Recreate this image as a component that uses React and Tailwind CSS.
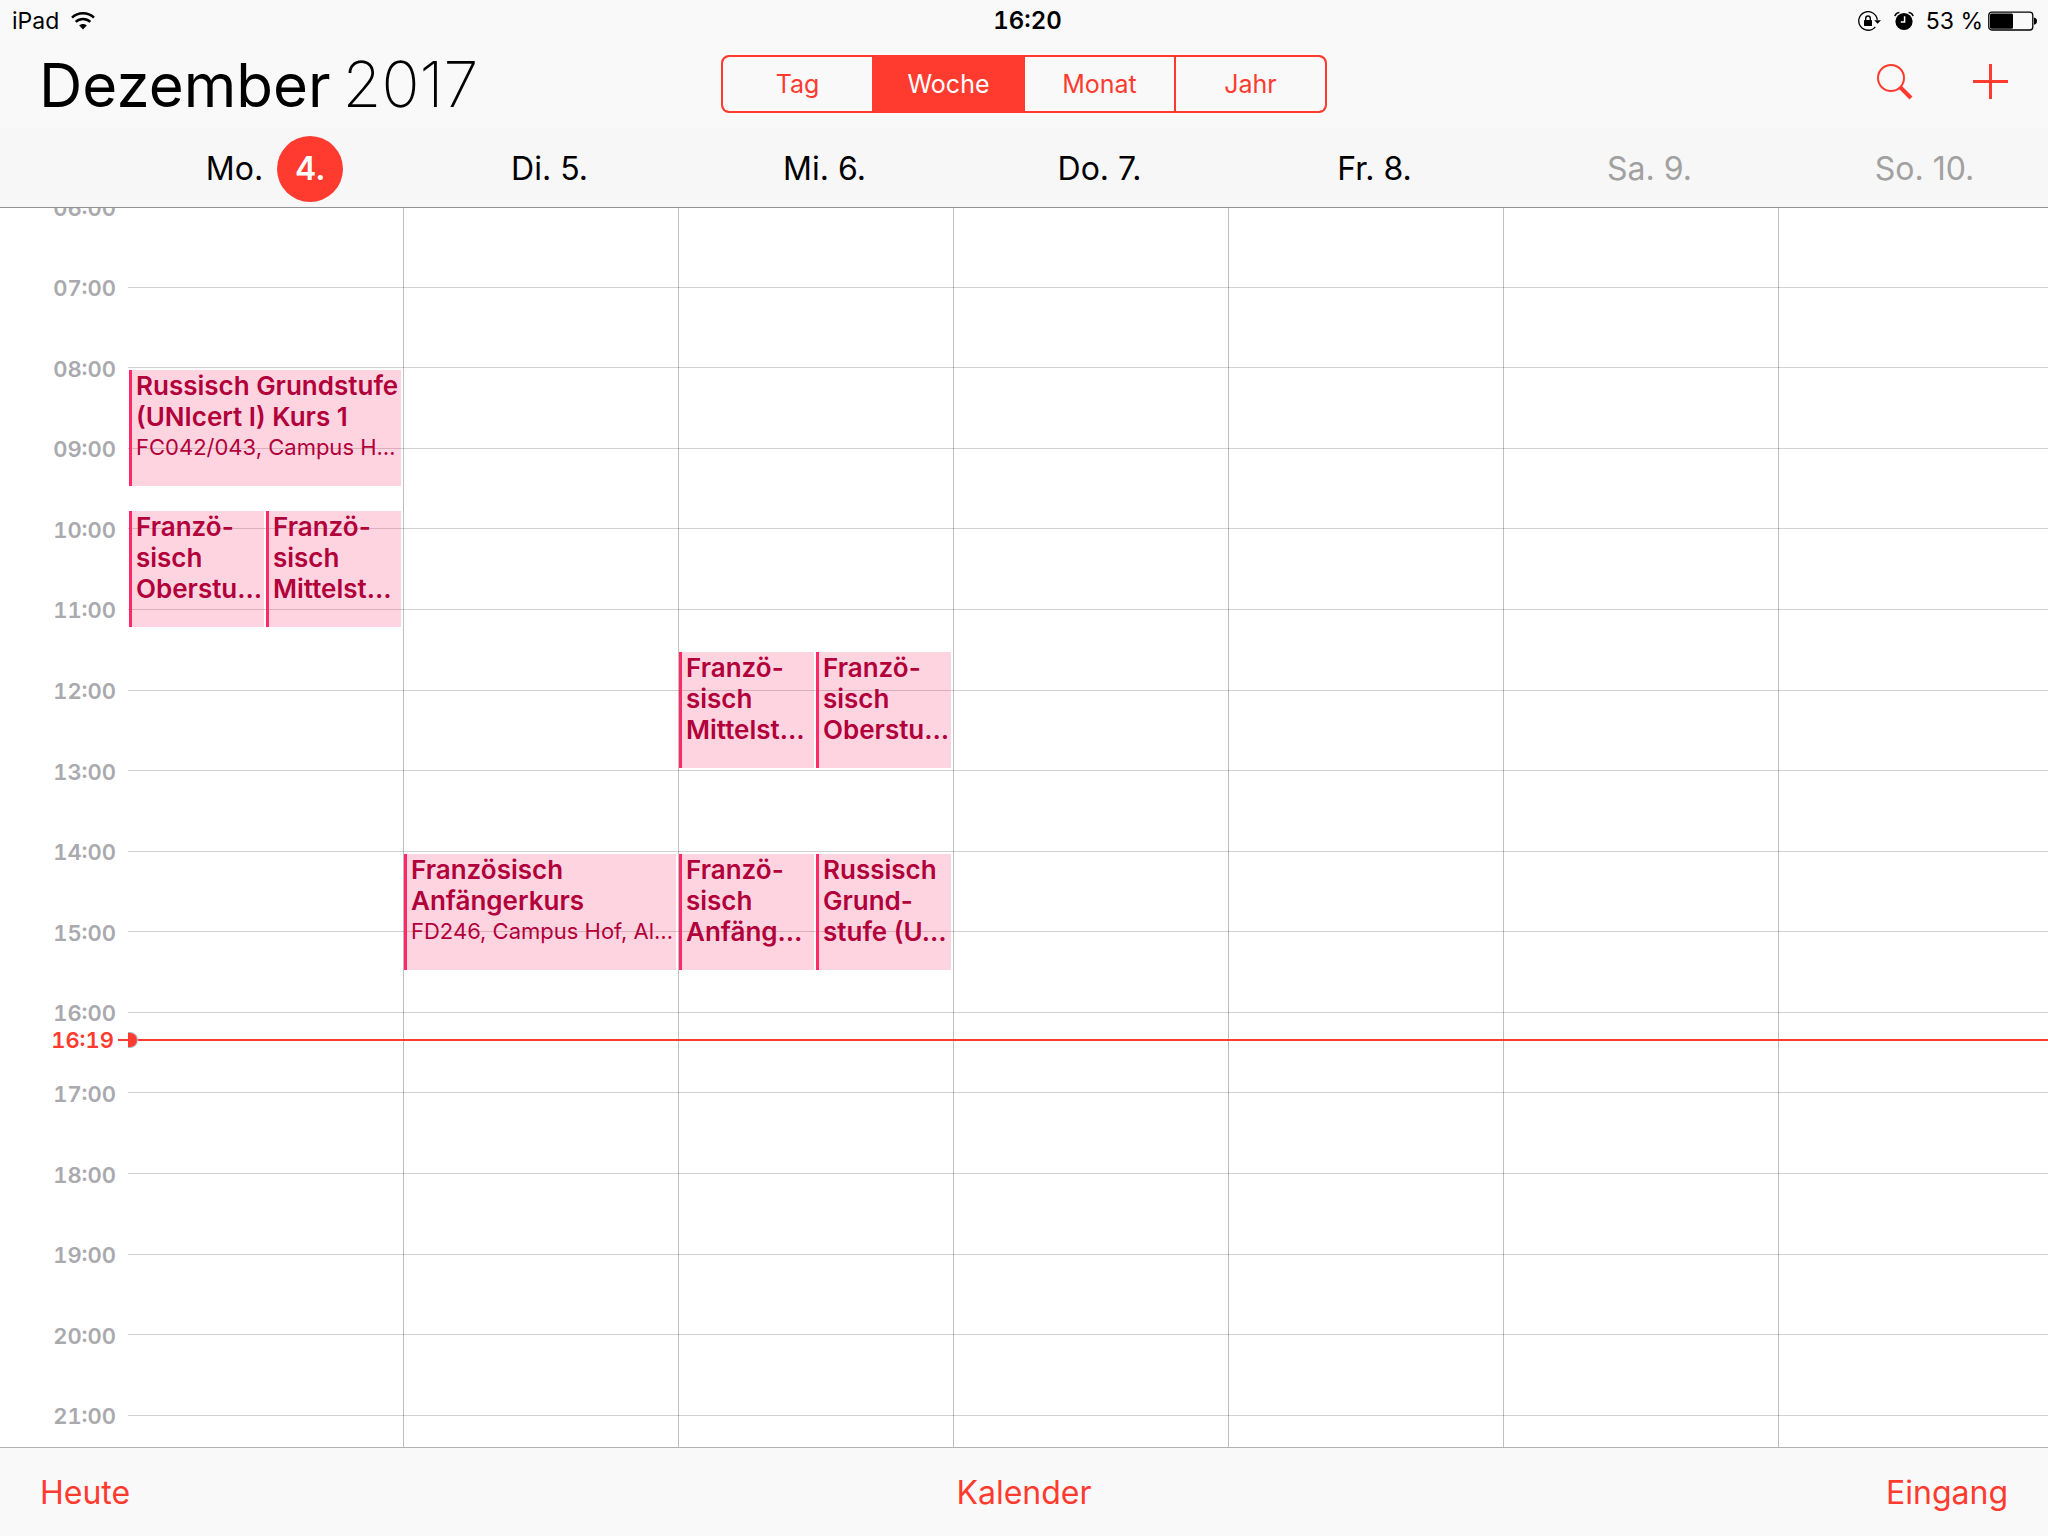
import React from "react";

const days = [
  { label: "Di. 5." },
  { label: "Mi. 6." },
  { label: "Do. 7." },
  { label: "Fr. 8." },
  { label: "Sa. 9.", weekend: true },
  { label: "So. 10.", weekend: true },
];

const hours = [6, 7, 8, 9, 10, 11, 12, 13, 14, 15, 16, 17, 18, 19, 20, 21];

// Each slot is one block of time in a day; overlapping events share it side by side.
const slots = [
  {
    day: 0,
    start: "08:00",
    end: "09:30",
    events: [{ title: ["Russisch Grundstufe", "(UNIcert I) Kurs 1"], place: "FC042/043, Campus H…" }],
  },
  {
    day: 0,
    start: "09:45",
    end: "11:15",
    events: [{ title: ["Franzö-", "sisch", "Oberstu…"] }, { title: ["Franzö-", "sisch", "Mittelst…"] }],
  },
  {
    day: 1,
    start: "14:00",
    end: "15:30",
    events: [{ title: ["Französisch", "Anfängerkurs"], place: "FD246, Campus Hof, Al…" }],
  },
  {
    day: 2,
    start: "11:30",
    end: "13:00",
    events: [{ title: ["Franzö-", "sisch", "Mittelst…"] }, { title: ["Franzö-", "sisch", "Oberstu…"] }],
  },
  {
    day: 2,
    start: "14:00",
    end: "15:30",
    events: [{ title: ["Franzö-", "sisch", "Anfäng…"] }, { title: ["Russisch", "Grund-", "stufe (U…"] }],
  },
];

// The grid has one row for every minute, counted from 06:00.
function rowOf(time) {
  const [h, m] = time.split(":").map(Number);
  return (h - 6) * 60 + m + 1;
}

function WifiIcon() {
  return (
    <svg className="h-[18px] w-6" viewBox="0 0 24 18" fill="none" stroke="#000" strokeWidth="2.5">
      <path d="M1 5.6C7.2-.1 16.8-.1 23 5.6" />
      <path d="M4.7 9.9c4.2-3.9 10.4-3.9 14.6 0" />
      <path d="M8.2 13.4c2.2-2 5.4-2 7.6 0L12 17.6z" fill="#000" stroke="none" />
    </svg>
  );
}

function RotationLockIcon() {
  return (
    <svg className="h-5 w-6" viewBox="0 0 24 20" fill="none">
      <path d="M19.3 8.9A9.3 9.3 0 1 0 17.3 15.8" stroke="#000" strokeWidth="1.3" />
      <path d="M16.2 9.2h6.8l-3.4 3.6z" fill="#000" />
      <rect x="6" y="9" width="8" height="6" rx=".6" fill="#000" />
      <path d="M7.7 9.2V7.3a2.3 2.3 0 0 1 4.6 0v1.9" stroke="#000" strokeWidth="1.4" />
    </svg>
  );
}

function AlarmIcon() {
  return (
    <svg className="h-5 w-5" viewBox="0 0 20 20" fill="none">
      <circle cx="10" cy="10.5" r="8.6" fill="#000" />
      <path d="M.9 5.2Q1.6 2 5.4 1.5M19.1 5.2Q18.4 2 14.6 1.5" stroke="#000" strokeWidth="1.6" />
      <path d="M10.6 5.2v5.900H6.800" stroke="#f9f9f9" strokeWidth="1.5" />
    </svg>
  );
}

function BatteryIcon() {
  return (
    <svg className="h-5 w-[49px]" viewBox="0 0 49 20" fill="none">
      <rect x=".8" y="1.2" width="44" height="17.8" rx="3" stroke="#000" strokeWidth="1.3" />
      <rect x="2" y="2.5" width="23" height="15.2" rx="1.5" fill="#000" />
      <path d="M46 6.500q3 .6 3 3.600t-3 3.600z" fill="#000" />
    </svg>
  );
}

function SearchIcon() {
  return (
    <svg className="h-9 w-9" viewBox="0 0 36 36" fill="none" stroke="#ff3b30">
      <circle cx="14" cy="14" r="13" strokeWidth="2" />
      <path d="M23.500 23.500L34 34" strokeWidth="4" />
    </svg>
  );
}

function PlusIcon() {
  return (
    <svg className="h-9 w-9" viewBox="0 0 36 36" fill="none" stroke="#ff3b30" strokeWidth="3">
      <path d="M0 17.500h35M17.500 0v35" />
    </svg>
  );
}

function StatusBar() {
  return (
    <div className="grid h-10 grid-cols-3 items-center pl-3 pr-[11px] pt-[2px] text-[23px] leading-9">
      <div className="flex items-center gap-3">
        <span>iPad</span>
        <WifiIcon />
      </div>
      <span className="pl-[6px] text-center text-2xl font-semibold leading-9 tabular-nums">16:20</span>
      <div className="flex items-center justify-end">
        <RotationLockIcon />
        <span className="ml-3 mr-3 flex">
          <AlarmIcon />
        </span>
        <span className="mr-[5px]">53 %</span>
        <BatteryIcon />
      </div>
    </div>
  );
}

function Toolbar() {
  const views = ["Tag", "Woche", "Monat", "Jahr"];
  return (
    <div className="grid h-[88px] grid-cols-[1fr_606px_1fr] items-center pl-[39px] pr-[39px]">
      <h1 className="flex items-baseline gap-3 whitespace-nowrap text-[60px] leading-[80px]">
        <span>Dezember</span>
        <span className="text-[63px] font-extralight">2017</span>
      </h1>
      <div className="grid h-[58px] grid-cols-4 gap-[2px] overflow-hidden rounded-lg border-2 border-[#ff3b30] bg-[#ff3b30] text-[25px]">
        {views.map((v, i) => (
          <button
            key={v}
            type="button"
            aria-pressed={v === "Woche"}
            className={
              v === "Woche"
                ? "pt-[2px] text-white"
                : i === 0
                  ? "rounded-l-[6px] bg-[#f9f9f9] pt-[2px] text-[#ff3b30]"
                  : i === 3
                    ? "rounded-r-[6px] bg-[#f9f9f9] pt-[2px] text-[#ff3b30]"
                    : "bg-[#f9f9f9] pt-[2px] text-[#ff3b30]"
            }
          >
            {v}
          </button>
        ))}
      </div>
      <div className="flex items-center justify-end gap-[60px] pb-1">
        <button type="button" aria-label="Suchen">
          <SearchIcon />
        </button>
        <button type="button" aria-label="Neues Ereignis">
          <PlusIcon />
        </button>
      </div>
    </div>
  );
}

function DayHeader() {
  return (
    <div className="overflow-hidden border-b border-[#929292] bg-[#f7f7f7]">
      <div className="-mr-[14px] grid h-[79px] grid-cols-7 items-center pl-[137px] pt-[3px] text-center text-[32px]">
        <div className="flex items-center justify-center gap-[14px]">
          <span>Mo.</span>
          <span className="grid size-[66px] place-items-center rounded-full bg-[#ff3b30] font-semibold text-white">4.</span>
        </div>
        {days.map((d) => (
          <div key={d.label} className={d.weekend ? "text-[#a1a1a1]" : ""}>
            {d.label}
          </div>
        ))}
      </div>
    </div>
  );
}

function Event({ title, place }) {
  return (
    <button
      type="button"
      className="flex flex-col items-start overflow-hidden whitespace-nowrap border-l-[3px] border-[#ff2968] bg-[#ff2968]/20 pl-1 text-left text-[#b1003a]"
    >
      {title.map((line) => (
        <span key={line} className="text-[26px] font-semibold leading-[31px]">
          {line}
        </span>
      ))}
      {place && <span className="text-[22px] leading-[31px]">{place}</span>}
    </button>
  );
}

function WeekGrid() {
  return (
    <main className="flex min-h-0 flex-1 flex-col overflow-hidden bg-white">
      <div className="-mr-[6px] -mt-[2px] grid min-h-0 flex-1 grid-cols-[129px_repeat(7,minmax(0,1fr))] grid-rows-[repeat(924,minmax(0,1fr))]">
        {hours.map((h) => {
          const time = String(h).padStart(2, "0") + ":00";
          const row = rowOf(time);
          return (
            <React.Fragment key={h}>
              <time
                className="col-start-1 mt-[2px] flex h-0 items-center justify-end pr-[13px] text-[22px] font-semibold tabular-nums text-[#a9a9ae]"
                style={{ gridRowStart: row }}
              >
                {time}
              </time>
              <div className="col-start-2 -col-end-1 -ml-px h-px bg-black/18" style={{ gridRowStart: row }} />
            </React.Fragment>
          );
        })}
        {[0, 1, 2, 3, 4, 5, 6].map((d) => (
          <div key={d} className="row-start-1 -row-end-1 border-r border-black/25" style={{ gridColumnStart: d + 2 }} />
        ))}
        {slots.map((s) => (
          <div
            key={s.day + s.start}
            className="mb-[2px] mr-[3px] mt-[3px] grid auto-cols-fr grid-flow-col gap-[2px]"
            style={{ gridColumnStart: s.day + 2, gridRow: `${rowOf(s.start)} / ${rowOf(s.end)}` }}
          >
            {s.events.map((e) => (
              <Event key={e.title.join()} {...e} />
            ))}
          </div>
        ))}
        <div className="col-start-1 -col-end-1 flex h-[2px] items-center" style={{ gridRowStart: rowOf("16:20") }}>
          <time className="w-[118px] pr-1 text-right text-[22px] font-semibold leading-none tabular-nums text-[#ff3b30]">
            16:19
          </time>
          <div className="h-[2px] w-[10px] bg-[#ff3b30]" />
          <div className="h-4 w-[10px] rounded-r-full border border-l-0 border-black/30 bg-[#ff3b30] bg-clip-padding" />
          <div className="h-[2px] flex-1 bg-[#ff3b30]" />
        </div>
      </div>
    </main>
  );
}

export default function App() {
  return (
    <div className="flex h-screen min-w-[1280px] flex-col bg-[#f9f9f9] font-['Inter',sans-serif] text-black">
      <header>
        <StatusBar />
        <Toolbar />
        <DayHeader />
      </header>
      <WeekGrid />
      <footer className="grid h-[89px] grid-cols-3 items-center border-t border-[#b2b2b2] px-10 pt-[2px] text-[32px] text-[#ff3b30]">
        <button type="button" className="justify-self-start">
          Heute
        </button>
        <button type="button" className="justify-self-center">
          Kalender
        </button>
        <button type="button" className="justify-self-end">
          Eingang
        </button>
      </footer>
    </div>
  );
}
